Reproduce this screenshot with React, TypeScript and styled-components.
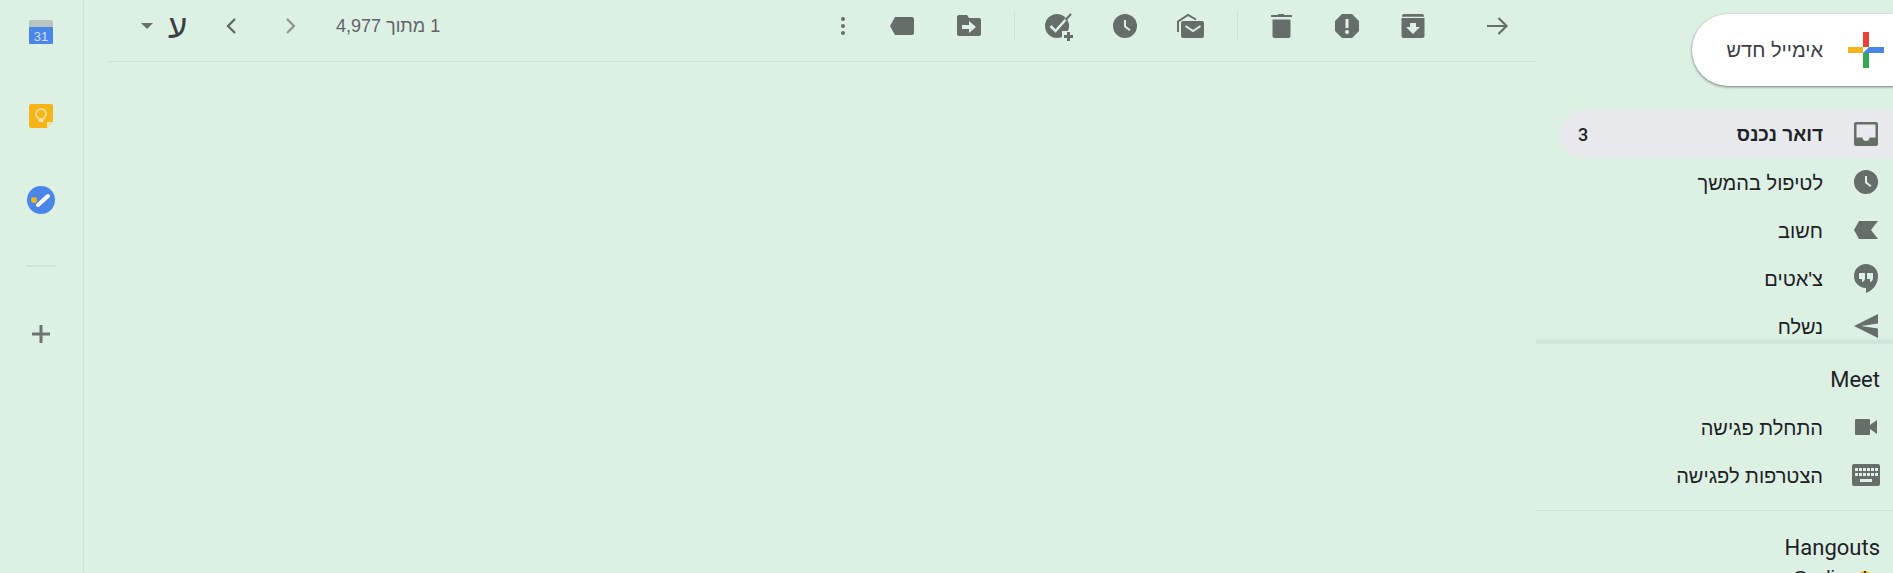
import styled, { createGlobalStyle } from "styled-components";

const Global = createGlobalStyle`
  html, body { margin: 0; height: 100%; overflow: hidden; }
  body { background: #dcf0e4; font-family: "Liberation Sans", "Noto Sans", sans-serif; }
`;

const Page = styled.div`
  width: 1893px;
  height: 573px;
  display: flex;
  overflow: hidden;
`;

const Rail = styled.aside`
  width: 83px;
  flex: none;
  border-right: 1px solid #cfe3d7;
  display: flex;
  flex-direction: column;
  align-items: center;
  padding-top: 20px;
`;

const RailIcon = styled.div`
  width: 24px;
  height: 24px;
  margin: 0 0 60px -1px;
`;

const RailLine = styled.div`
  width: 30px;
  height: 2px;
  background: #cfe3d7;
  margin: -7px 0 0 -1px;
`;

const RailPlus = styled.div`
  margin: 57px 0 0 -1px;
  height: 20px;
`;

const Main = styled.main`
  flex: 1;
  padding-left: 24px;
  min-width: 0;
`;

const Toolbar = styled.div`
  height: 52px;
  padding: 0 27px 9px 33px;
  border-bottom: 1px solid #cfe3d7;
  display: flex;
  align-items: center;
`;

const Sort = styled.div`
  display: flex;
  align-items: center;
  gap: 15px;
  width: 78px;
`;

const Caret = styled.div`
  width: 0;
  height: 0;
  border: 6px solid transparent;
  border-top-color: #6a7069;
  border-bottom: none;
`;

const Letter = styled.span`
  font-size: 33px;
  color: #3c4043;
  line-height: 1;
`;

const Pager = styled.div`
  display: flex;
  align-items: center;
  gap: 36px;
`;

const Count = styled.span`
  margin-left: 33px;
  font-size: 18px;
  color: #5f6368;
  direction: rtl;
`;

const Spacer = styled.div`
  flex: 1;
`;

const Actions = styled.div`
  display: flex;
  align-items: center;
`;

const ToolIcon = styled.div<{ $gap?: number; $wide?: boolean }>`
  width: ${(p) => (p.$wide ? 28 : 24)}px;
  height: 24px;
  flex: none;
  margin-left: ${(p) => p.$gap ?? 42}px;
  color: #666e68;

  svg {
    display: block;
    overflow: visible;
  }
`;

const Sep = styled.div<{ $gap: number }>`
  width: 1px;
  height: 30px;
  background: #cfe3d7;
  margin-left: ${(p) => p.$gap}px;
`;

const Side = styled.nav`
  width: 357px;
  flex: none;
  direction: rtl;
  padding-top: 14px;
`;

const Compose = styled.div`
  width: 201px;
  height: 72px;
  margin-bottom: 24px;
  background: #fff;
  border-radius: 36px 0 0 36px;
  box-shadow: 0 1px 3px rgba(60, 64, 67, 0.45), 0 1px 2px rgba(60, 64, 67, 0.3);
  display: flex;
  align-items: center;
  padding-right: 9px;
  box-sizing: border-box;
  font-size: 20px;
  color: #3c4043;
`;

const ComposeLabel = styled.span`
  margin-right: 25px;
`;

const MailList = styled.div`
  height: 229px;
  overflow: hidden;
`;

const ListEdge = styled.div`
  height: 5px;
  background: linear-gradient(#d6e8dd, #cfe3d7 70%, #d6e8dd);
`;

const Row = styled.div<{ $active?: boolean }>`
  height: 48px;
  width: 333px;
  display: flex;
  align-items: center;
  padding-right: 15px;
  box-sizing: border-box;
  border-radius: 24px 0 0 24px;
  font-size: ${(p) => (p.$active ? 19 : 20)}px;
  font-weight: ${(p) => (p.$active ? 700 : 400)};
  color: #202124;
  background: ${(p) => (p.$active ? "#e7e9ec" : "transparent")};
`;

const RowIcon = styled.div`
  width: 24px;
  height: 24px;
  flex: none;
  color: #666e68;

  svg {
    display: block;
    overflow: visible;
  }
`;

const RowLabel = styled.span`
  margin-right: 31px;
  padding-top: 2px;
  flex: 1;
`;

const Badge = styled.span`
  font-family: Roboto, sans-serif;
  font-size: 18px;
  font-weight: 500;
  margin-left: 18px;
`;

const Section = styled.div<{ $top?: number }>`
  font-family: Roboto, sans-serif;
  font-size: 22px;
  color: #202124;
  direction: ltr;
  text-align: right;
  padding-right: 13px;
  line-height: 24px;
  padding-top: ${(p) => p.$top ?? 24}px;
`;

const SectionRows = styled.div`
  margin-top: 11px;
  padding-bottom: 11px;
  border-bottom: 1px solid #cfe3d7;
`;

const Contact = styled.div`
  display: flex;
  align-items: flex-start;
  justify-content: flex-end;
  gap: 22px;
  direction: ltr;
  font-size: 20px;
  line-height: 24px;
  color: #202124;
  padding-right: 20px;
  margin-top: 6px;
`;

const Avatar = styled.div`
  position: relative;
  width: 16px;
  height: 16px;
  margin-top: 5px;
  border-radius: 50%;
  background: #f5b915;

  &::after {
    content: "";
    position: absolute;
    left: 7px;
    top: 0;
    width: 2px;
    height: 5px;
    background: #3c3327;
  }
`;

function Calendar() {
  return (
    <svg width="24" height="24" viewBox="0 0 24 24">
      <rect x="0" y="0" width="24" height="8" rx="2" fill="#b9c5be" />
      <rect x="0" y="7" width="24" height="17" rx="1" fill="#4a86e8" />
      <text x="12" y="21" textAnchor="middle" fontSize="13" fontFamily="Liberation Sans" fill="#cfe0f8">31</text>
    </svg>
  );
}

function Keep() {
  return (
    <svg width="24" height="24" viewBox="0 0 24 24">
      <path d="M2 0h20a2 2 0 0 1 2 2v16l-6 6H2a2 2 0 0 1-2-2V2a2 2 0 0 1 2-2z" fill="#f4b41a" />
      <path d="M18 24v-6h6z" fill="#f6e3a8" />
      <circle cx="12" cy="10" r="5" fill="none" stroke="#f7e2a4" strokeWidth="1.6" />
      <rect x="9.500" y="15" width="5" height="3" fill="#f7e2a4" />
    </svg>
  );
}

function Tasks() {
  return (
    <svg width="28" height="28" viewBox="0 0 28 28" style={{ margin: "-2px" }}>
      <circle cx="14" cy="14" r="14" fill="#4a86e8" />
      <circle cx="7" cy="14" r="3" fill="#f4b41a" />
      <path d="M11 19L21 10" stroke="#fff" strokeWidth="4" strokeLinecap="round" />
    </svg>
  );
}

function Glyph({ d, size = 24 }: { d: string; size?: number }) {
  return (
    <svg width={size} height="24" viewBox={`0 0 ${size} 24`} fill="currentColor">
      <path d={d} fillRule="evenodd" />
    </svg>
  );
}

const clock = "M12 0a12 12 0 1 0 0 24 12 12 0 0 0 0-24zm-1 6h2v6l4.500 3.500-1.200 1.500L11 13z";

function keyboardPath() {
  let d = "M0 1h24a2 2 0 0 1 2 2v18a2 2 0 0 1-2 2H0a2 2 0 0 1-2-2V3a2 2 0 0 1 2-2z";
  for (const y of [5, 10]) {
    for (let i = 0; i < 6; i++) {
      d += `M${1 + i * 4} ${y}h3v3h-3z`;
    }
  }
  return d + "M6 16h12v3H6z";
}

function Chevron({ dir, light }: { dir: "l" | "r"; light?: boolean }) {
  return (
    <svg width="24" height="24" viewBox="0 0 24 24" fill="none" stroke={light ? "#8b938d" : "#5f6661"} strokeWidth="2.200">
      <path d={dir === "l" ? "M16 5l-7 7 7 7" : "M8 5l7 7-7 7"} />
    </svg>
  );
}

export default function App() {
  return (
    <Page>
      <Global />
      <Rail>
        <RailIcon><Calendar /></RailIcon>
        <RailIcon><Keep /></RailIcon>
        <RailIcon><Tasks /></RailIcon>
        <RailLine />
        <RailPlus>
          <svg width="20" height="20" viewBox="0 0 20 20" fill="#6d7570">
            <path d="M8.500 1h3v7.500H19v3h-7.500V19h-3v-7.500H1v-3h7.500z" />
          </svg>
        </RailPlus>
      </Rail>
      <Main>
        <Toolbar>
          <Sort>
            <Caret />
            <Letter>ע</Letter>
          </Sort>
          <Pager>
            <Chevron dir="l" />
            <Chevron dir="r" light />
          </Pager>
          <Count>1 מתוך 4,977</Count>
          <Spacer />
          <Actions>
            <ToolIcon $gap={0}>
              <Glyph d="M12 3a2 2 0 1 0 0 4 2 2 0 0 0 0-4zm0 7a2 2 0 1 0 0 4 2 2 0 0 0 0-4zm0 7a2 2 0 1 0 0 4 2 2 0 0 0 0-4z" />
            </ToolIcon>
            <ToolIcon $gap={35}>
              <Glyph d="M0 12L5 3h17a2 2 0 0 1 2 2v14a2 2 0 0 1-2 2H5z" />
            </ToolIcon>
            <ToolIcon $gap={43}>
              <Glyph d="M2 1h8l2 3h10a2 2 0 0 1 2 2v14a2 2 0 0 1-2 2H2a2 2 0 0 1-2-2V3a2 2 0 0 1 2-2zM5 11h7V7l7 6-7 6v-4H5z" />
            </ToolIcon>
            <Sep $gap={33} />
            <ToolIcon $gap={30} $wide>
              <svg width="28" height="24" viewBox="0 0 28 24">
                <circle cx="12" cy="12" r="12" fill="currentColor" />
                <path d="M5.500 12l5 5L23 3" fill="none" stroke="#dcf0e4" strokeWidth="2.500" />
                <path d="M20.500 6L26 0" fill="none" stroke="currentColor" strokeWidth="2" />
                <path d="M17 17h12v12H17z" fill="#dcf0e4" />
                <path d="M22 18h3v3h3v3h-3v3h-3v-3h-3v-3h3z" fill="currentColor" />
              </svg>
            </ToolIcon>
            <ToolIcon $gap={40}>
              <Glyph d={clock} />
            </ToolIcon>
            <ToolIcon $gap={40} $wide>
              <svg width="28" height="24" viewBox="0 0 28 24">
                <path d="M1 18V7.500L11 1l8 4.500" fill="none" stroke="currentColor" strokeWidth="2" />
                <path d="M6 7h19a2 2 0 0 1 2 2v13a2 2 0 0 1-2 2H6a2 2 0 0 1-2-2V9a2 2 0 0 1 2-2z" fill="currentColor" />
                <path d="M8.500 12l7.500 5 7.500-5" fill="none" stroke="#dcf0e4" strokeWidth="2" />
              </svg>
            </ToolIcon>
            <Sep $gap={32} />
            <ToolIcon $gap={31}>
              <Glyph d="M2 1h7V0h6v1h8v2H2zM3.500 5.500h18V22a2 2 0 0 1-2 2h-14a2 2 0 0 1-2-2z" />
            </ToolIcon>
            <ToolIcon>
              <Glyph d="M7 0h10l7 7v10l-7 7H7l-7-7V7zM10.500 5v9h3V5zM12 16a2 2 0 1 0 0 4 2 2 0 0 0 0-4z" />
            </ToolIcon>
            <ToolIcon>
              <Glyph d="M3 0h18a2 2 0 0 1 2 2v.800H1V2a2 2 0 0 1 2-2zM.500 4h23v18a2 2 0 0 1-2 2h-19a2 2 0 0 1-2-2zM9 9v4H5l7 7 7-7h-4V9z" />
            </ToolIcon>
            <ToolIcon $gap={60}>
              <svg width="24" height="24" viewBox="0 0 24 24" fill="none" stroke="currentColor" strokeWidth="2.200">
                <path d="M2 12h19M13.500 4l8 8-8 8" />
              </svg>
            </ToolIcon>
          </Actions>
        </Toolbar>
      </Main>
      <Side>
        <Compose>
          <svg width="36" height="36" viewBox="0 0 36 36">
            <path d="M15 0h6v15h-6z" fill="#ea4335" />
            <path d="M15 21h6v15h-6z" fill="#34a853" />
            <path d="M0 15h15v6H0z" fill="#f4b41a" />
            <path d="M21 15h15v6H15z" fill="#4a86e8" />
          </svg>
          <ComposeLabel>אימייל חדש</ComposeLabel>
        </Compose>
        <MailList>
          <Row $active>
            <RowIcon>
              <Glyph d="M2 0h20a2 2 0 0 1 2 2v20a2 2 0 0 1-2 2H2a2 2 0 0 1-2-2V2a2 2 0 0 1 2-2zM2.500 2.500v13h6c0 2 1.500 3.500 3.500 3.500s3.500-1.500 3.500-3.500h6v-13z" />
            </RowIcon>
            <RowLabel>דואר נכנס</RowLabel>
            <Badge>3</Badge>
          </Row>
          <Row>
            <RowIcon><Glyph d={clock} /></RowIcon>
            <RowLabel>לטיפול בהמשך</RowLabel>
          </Row>
          <Row>
            <RowIcon><Glyph d="M0 12L5 3h19l-7 9 7 9H5z" /></RowIcon>
            <RowLabel>חשוב</RowLabel>
          </Row>
          <Row>
            <RowIcon>
              <Glyph d="M12 -2a12 12 0 0 0 0 24v5c6-2 12-8 12-17A12 12 0 0 0 12 -2zM5 7h6v5c0 2-1 3.500-3 4v-3H5zM13 7h6v5c0 2-1 3.500-3 4v-3h-3z" />
            </RowIcon>
            <RowLabel>צ'אטים</RowLabel>
          </Row>
          <Row>
            <RowIcon><Glyph d="M0 12L24 0v9.500L7 12l17 2.500V24z" /></RowIcon>
            <RowLabel>נשלח</RowLabel>
          </Row>
        </MailList>
        <ListEdge />
        <Section>Meet</Section>
        <SectionRows>
          <Row>
            <RowIcon>
              <Glyph d="M2 4h13a1 1 0 0 1 1 1v5l7-5v14l-7-5v5a1 1 0 0 1-1 1H2a1 1 0 0 1-1-1V5a1 1 0 0 1 1-1z" />
            </RowIcon>
            <RowLabel>התחלת פגישה</RowLabel>
          </Row>
          <Row>
            <RowIcon><Glyph d={keyboardPath()} /></RowIcon>
            <RowLabel>הצטרפות לפגישה</RowLabel>
          </Row>
        </SectionRows>
        <Section $top={25}>Hangouts</Section>
        <Contact>
          <span>Oodi</span>
          <Avatar />
        </Contact>
      </Side>
    </Page>
  );
}
